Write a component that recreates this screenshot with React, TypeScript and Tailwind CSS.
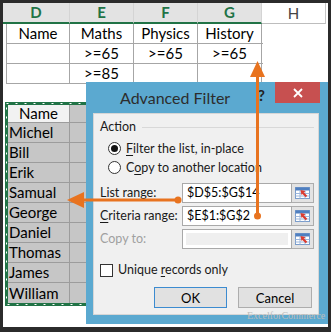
import type { ReactNode } from "react";

const headerCols = [
  { id: "D", w: "w-[67px]", active: true },
  { id: "E", w: "w-[64px]", active: true },
  { id: "F", w: "w-[64px]", active: true },
  { id: "G", w: "w-[64px]", active: true },
  { id: "H", w: "w-[64px]", active: false },
];

const criteriaRows = [
  ["Name", "Maths", "Physics", "History"],
  ["", ">=65", ">=65", ">=65"],
  ["", ">=85", "", ""],
];

const names = ["Michel", "Bill", "Erik", "Samual", "George", "Daniel", "Thomas", "James", "William"];

function RefIcon() {
  return (
    <svg width="17" height="14" viewBox="0 0 17 14">
      <rect x="1.5" y="1.5" width="14" height="11" fill="#fff" stroke="#7b9dcb" />
      <rect x="1.5" y="1.5" width="14" height="3" fill="#4f7fc0" />
      <path d="M6 4.5V12.5M11 4.5V12.5M1.5 7.5H15.5M1.5 10H15.5" stroke="#9db7dc" strokeWidth="1" />
      <path d="M12.5 10.5 L9 7" stroke="#dc3a2e" strokeWidth="2.2" />
      <polygon points="6.5,4 11.5,5 7.5,9" fill="#dc3a2e" />
    </svg>
  );
}

function RangeField({ label, value, disabled }: { label: ReactNode; value?: string; disabled?: boolean }) {
  return (
    <div className="flex h-[20px] items-center">
      <div className={["w-[88px] pl-[6px]", disabled ? "text-[#a0a0a0]" : "text-[#1a1a1a]"].join(" ")}>{label}</div>
      <div className="flex h-[20px] w-[110px] items-center border border-[#a9a9a9] bg-white">
        {disabled ? (
          <div className="mx-[3px] h-[12px] flex-1 bg-[#efefef]" />
        ) : (
          <span className="pl-[4px] text-[12.5px] text-black">{value}</span>
        )}
      </div>
      <div className="flex h-[20px] w-[22px] items-center justify-center border border-l-0 border-[#adadad] bg-[#e3e3e3]">
        <RefIcon />
      </div>
    </div>
  );
}

function Radio({ checked, children }: { checked?: boolean; children: ReactNode }) {
  return (
    <div className="flex h-[19px] items-center">
      <span className="ml-[14px] flex h-[13px] w-[13px] items-center justify-center rounded-full border border-[#333] bg-white">
        {checked && <span className="h-[7px] w-[7px] rounded-full bg-[#111]" />}
      </span>
      <span className="ml-[5px] text-[#1a1a1a]">{children}</span>
    </div>
  );
}

export default function App() {
  return (
    <div className="relative h-[332px] w-[331px] overflow-hidden bg-[#2b2b2b] pl-[3px] pt-[3px] font-['Lato',sans-serif]">
      <div className="relative h-[324px] w-[325px] bg-white">
        {/* column headers */}
        <div className="flex h-[21px]">
          {headerCols.map((c) => (
            <div
              key={c.id}
              className={[
                "flex items-center justify-center text-[15px]",
                c.w,
                c.active
                  ? "border-r border-b-2 border-r-[#d4d4d4] border-b-[#217346] bg-[#e3e3e3] font-bold text-[#217346]"
                  : "border-r border-b border-r-[#c6c6c6] border-b-[#bdbdbd] text-[#444]",
              ].join(" ")}
            >
              {c.id}
            </div>
          ))}
        </div>

        {/* criteria range */}
        <div className="ml-[3px] w-[257px] border-l border-[#a6a6a6]">
          {criteriaRows.map((row, r) => (
            <div key={r} className="flex h-[20px] border-b border-[#a6a6a6]">
              {row.map((cell, i) => (
                <div
                  key={i}
                  className={[
                    "flex items-center justify-center border-r border-[#a6a6a6] text-[15px] text-black",
                    i === 0 ? "w-[63px]" : "w-[64px]",
                  ].join(" ")}
                >
                  {cell}
                </div>
              ))}
            </div>
          ))}
        </div>

        {/* list range with marching ants */}
        <div className="relative ml-[2px] mt-[18px] w-[129px] border-[3px] border-[#217346]">
          <svg className="absolute -left-[3px] -top-[3px]" width="129" height="204">
            <rect x="1.5" y="1.5" width="126" height="201" fill="none" stroke="#fff" strokeWidth="1" strokeDasharray="2 7" />
          </svg>
          <div className="flex h-[18px] border-b border-[#9c9c9c]">
            <div className="flex w-[62px] items-center justify-center border-r border-[#9c9c9c] bg-[#f2f2f2] text-[15px] text-black">
              Name
            </div>
            <div className="flex-1 bg-[#c6c6c6]" />
          </div>
          {names.map((n, i) => (
            <div key={n} className={["flex h-[20px]", i < names.length - 1 ? "border-b border-[#9c9c9c]" : ""].join(" ")}>
              <div className="flex w-[62px] items-center border-r border-[#9c9c9c] bg-[#c6c6c6] pl-[1px] text-[15px] text-black">
                {n}
              </div>
              <div className="flex-1 bg-[#c6c6c6]" />
            </div>
          ))}
        </div>

        {/* Advanced Filter dialog */}
        <div className="absolute left-[83px] top-[79px] flex h-[242px] w-[242px] flex-col bg-[#5ba9d0] text-[12.5px]">
          <div className="flex h-[31px]">
            <div className="flex flex-1 items-center pl-[34px] text-[16px] text-[#2d2d2d]">Advanced Filter</div>
            <div className="pr-[10px] pt-[4px] text-[15px] font-bold leading-[18px] text-[#222]">?</div>
            <div className="flex h-[21px] w-[45px] items-center justify-center bg-[#c75050]">
              <svg width="10" height="10" viewBox="0 0 10 10">
                <path d="M1 1L9 9M9 1L1 9" stroke="#fff" strokeWidth="1.8" />
              </svg>
            </div>
            <div className="w-[8px]" />
          </div>

          <div className="ml-[7px] flex h-[202px] w-[226px] flex-col border border-[#d6d6d6] bg-[#f0f0f0] leading-[16px]">
            <div className="mt-[5px] flex items-center">
              <span className="pl-[6px] text-[#1a1a1a]">Action</span>
              <div className="ml-[6px] mr-[4px] h-px flex-1 bg-[#d8d8d8]" />
            </div>
            <div className="mt-[4px]">
              <Radio checked>
                <u className="underline-offset-2">F</u>ilter the list, in-place
              </Radio>
              <Radio>
                C<u className="underline-offset-2">o</u>py to another location
              </Radio>
            </div>
            <div className="mt-[6px] flex flex-col gap-[3px]">
              <RangeField
                label={
                  <>
                    <u className="underline-offset-2">L</u>ist range:
                  </>
                }
                value="$D$5:$G$14"
              />
              <RangeField
                label={
                  <>
                    <u className="underline-offset-2">C</u>riteria range:
                  </>
                }
                value="$E$1:$G$2"
              />
              <RangeField label="Copy to:" disabled />
            </div>
            <div className="mt-[13px] flex h-[16px] items-center pl-[6px]">
              <span className="h-[13px] w-[13px] border border-[#333] bg-white" />
              <span className="ml-[5px] text-[#1a1a1a]">
                Unique <u className="underline-offset-2">r</u>ecords only
              </span>
            </div>
            <div className="mt-[9px] flex justify-end gap-[11px] pr-[6px]">
              <button type="button" className="h-[21px] w-[73px] border border-[#3c8bd0] bg-[#e1e1e1] text-[13px] text-black">
                OK
              </button>
              <button type="button" className="h-[21px] w-[74px] border border-[#adadad] bg-[#e1e1e1] text-[13px] text-black">
                Cancel
              </button>
            </div>
          </div>
        </div>

        <div className="absolute left-[244px] top-[305px] font-['Liberation_Serif',serif] text-[10px] text-[#bcbcbc]">
          ExcelforCommerce
        </div>
      </div>

      {/* orange arrows */}
      <svg className="pointer-events-none absolute left-0 top-0" width="331" height="332">
        <line x1="257.5" y1="216" x2="257.5" y2="74" stroke="#e8731f" strokeWidth="3" />
        <polygon points="257.5,61 250,77 265,77" fill="#e8731f" />
        <circle cx="257.5" cy="216" r="3.5" fill="#e8731f" />
        <line x1="178" y1="200" x2="82" y2="200" stroke="#e8731f" strokeWidth="3" />
        <polygon points="67,200 84,192 84,208" fill="#e8731f" />
        <circle cx="178" cy="200" r="3.5" fill="#e8731f" />
      </svg>
    </div>
  );
}
